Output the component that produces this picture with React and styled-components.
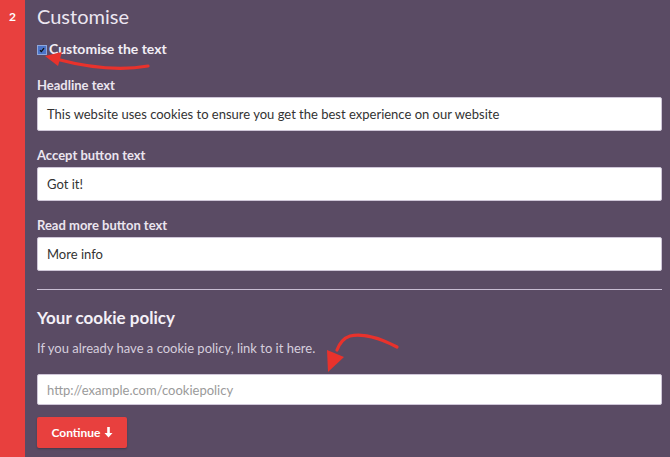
import React from "react";
import styled, { createGlobalStyle } from "styled-components";

const Global = createGlobalStyle`
  html, body { margin: 0; padding: 0; background: #5a4b64; }
  body { font-family: "Lato", "Open Sans", sans-serif; }
`;

const Page = styled.div`
  display: flex;
  width: 670px;
  height: 457px;
  overflow: hidden;
  position: relative;
  background: #5a4b64;
`;

const Rail = styled.div`
  width: 25px;
  flex: none;
  background: #e8403e;
  color: #fff;
  font-weight: 700;
  font-size: 12px;
  text-align: center;
  padding-top: 9px;
  box-sizing: border-box;
`;

const Content = styled.div`
  flex: 1;
  padding: 4px 8px 0 12px;
  display: flex;
  flex-direction: column;
`;

const Title = styled.h2`
  margin: 0;
  font-weight: 400;
  font-size: 20px;
  color: #ece6f1;
  line-height: 24px;
`;

const CheckRow = styled.label`
  display: flex;
  align-items: center;
  gap: 2px;
  margin-top: 12px;
  height: 16px;
  font-weight: 700;
  font-size: 14px;
  color: #f2eef5;
`;

const Box = styled.span`
  width: 8px;
  height: 8px;
  background: #4a73c8;
  border: 1px solid #8ea7dd;
  display: inline-flex;
  align-items: center;
  justify-content: center;
  margin-top: 3px;
`;

const Label = styled.div`
  font-weight: 700;
  font-size: 13px;
  color: #ebe5ef;
  margin: ${(p) => p.$top || 16}px 0 4px;
  line-height: 16px;
  height: 16px;
`;

const Field = styled.div`
  height: ${(p) => p.$h || 34}px;
  flex: none;
  box-sizing: border-box;
  background: #fff;
  border: 1px solid #cfc6d8;
  border-radius: 2px;
  display: flex;
  align-items: center;
  padding-left: 9px;
  font-size: 13px;
  color: ${(p) => (p.$placeholder ? "#9a9a9a" : "#333")};
`;

const Divider = styled.hr`
  border: none;
  border-top: 1px solid #c8bdd3;
  margin: 18px 0 0;
  height: 0;
`;

const Heading = styled.h3`
  margin: 18px 0 0;
  font-weight: 700;
  font-size: 17px;
  color: #f4f0f7;
  line-height: 20px;
`;

const Para = styled.p`
  margin: 10px 0 0;
  font-size: 13px;
  color: #d6cedd;
  line-height: 20px;
`;

const UrlField = styled(Field)`
  margin-top: 16px;
`;

const Button = styled.button`
  margin-top: 12px;
  align-self: flex-start;
  width: 90px;
  height: 31px;
  flex: none;
  background: #e8403e;
  border: none;
  border-radius: 2px;
  color: #fff;
  font-family: inherit;
  font-weight: 700;
  font-size: 12px;
  box-shadow: 0 1px 2px rgba(0,0,0,0.25);
  display: flex;
  align-items: center;
  justify-content: center;
  gap: 3px;
`;

const Overlay = styled.svg`
  position: absolute;
  left: 0;
  top: 0;
  pointer-events: none;
`;

export default function App() {
  return (
    <>
      <Global />
      <Page>
        <Rail>2</Rail>
        <Content>
          <Title>Customise</Title>
          <CheckRow>
            <Box>
              <svg width="6" height="6" viewBox="0 0 6 6">
                <path d="M1 3.2 L2.4 4.6 L5 1.2" stroke="#111" strokeWidth="1.3" fill="none" />
              </svg>
            </Box>
            Customise the text
          </CheckRow>
          <Label $top={21}>Headline text</Label>
          <Field>This website uses cookies to ensure you get the best experience on our website</Field>
          <Label>Accept button text</Label>
          <Field>Got it!</Field>
          <Label>Read more button text</Label>
          <Field>More info</Field>
          <Divider />
          <Heading>Your cookie policy</Heading>
          <Para>If you already have a cookie policy, link to it here.</Para>
          <UrlField $h={31} $placeholder>http://example.com/cookiepolicy</UrlField>
          <Button>
            Continue
            <svg width="9" height="11" viewBox="0 0 9 11">
              <path d="M3.2 0 H5.8 V6 H8.5 L4.5 10.5 L0.5 6 H3.2 Z" fill="#fff" />
            </svg>
          </Button>
        </Content>
        <Overlay width="670" height="457" viewBox="0 0 670 457">
          <path d="M148 66 C120 71 90 68 56 59" stroke="#e8322c" strokeWidth="3.2" fill="none" strokeLinecap="round" />
          <path d="M45 56 L62 52 L58 66 Z" fill="#e8322c" />
          <path d="M397 347 C380 338 362 333 350 336 C344 338 340 342 337 350" stroke="#e8322c" strokeWidth="3.2" fill="none" strokeLinecap="round" />
          <path d="M328 372 L327 350 L344 357 Z" fill="#e8322c" />
        </Overlay>
      </Page>
    </>
  );
}
